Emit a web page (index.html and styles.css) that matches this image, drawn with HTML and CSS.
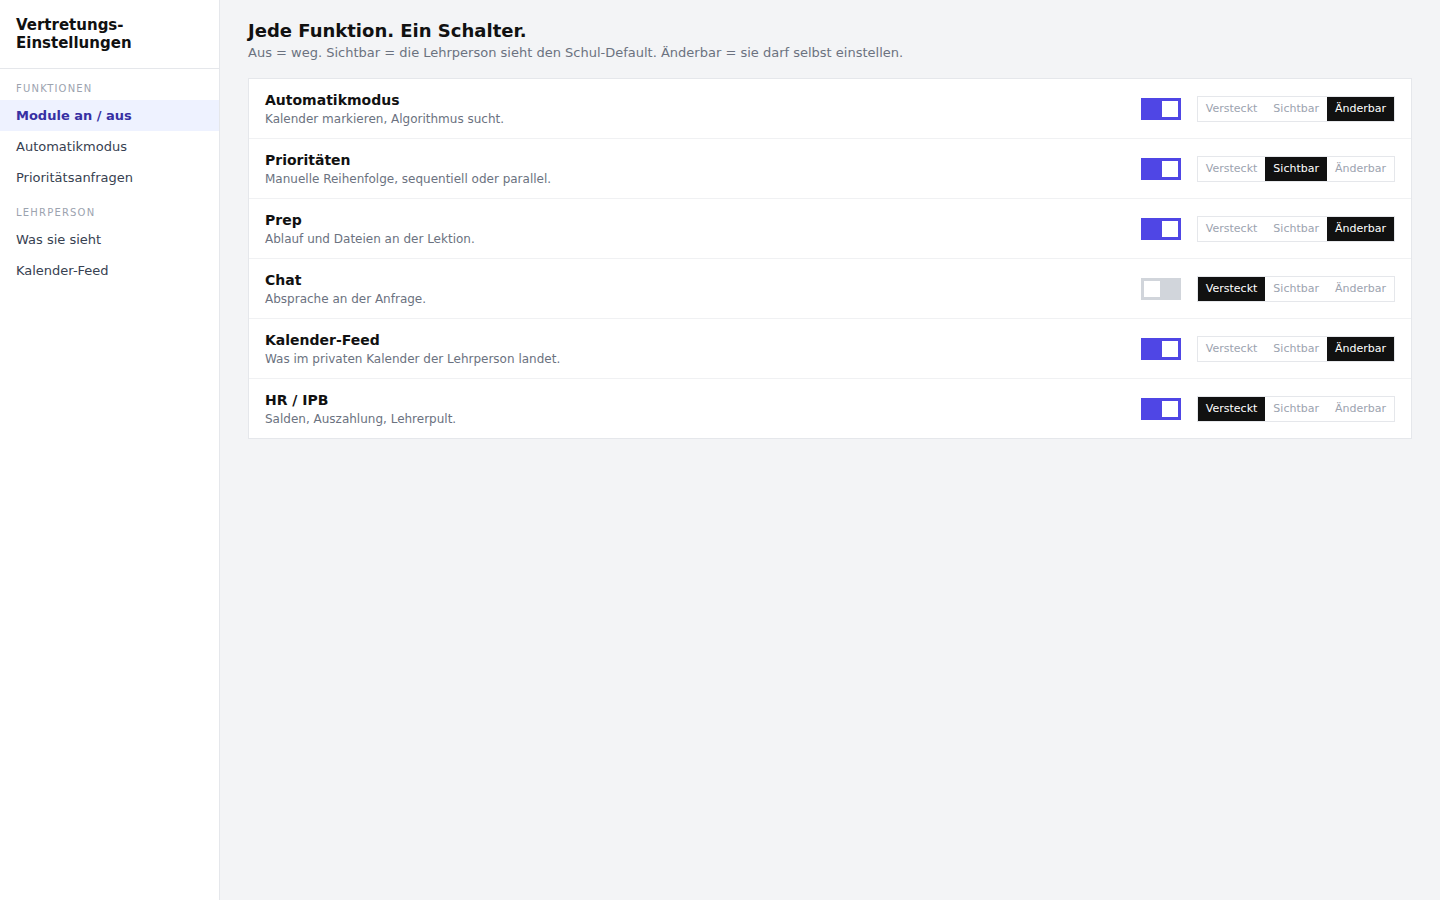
FILE: index.html
```html
<!DOCTYPE html>
<html lang="de">
<head>
<meta charset="utf-8">
<title>Vertretungs-Einstellungen</title>
<link rel="stylesheet" href="styles.css">
</head>
<body>
<div class="app">
  <aside class="sidebar">
    <div class="brand">Vertretungs-<br>Einstellungen</div>
    <div class="section-label">Funktionen</div>
    <a class="nav-item active">Module an / aus</a>
    <a class="nav-item">Automatikmodus</a>
    <a class="nav-item">Prioritätsanfragen</a>
    <div class="section-label">Lehrperson</div>
    <a class="nav-item">Was sie sieht</a>
    <a class="nav-item">Kalender-Feed</a>
  </aside>
  <main class="main">
    <h1 class="title">Jede Funktion. Ein Schalter.</h1>
    <p class="subtitle">Aus = weg. Sichtbar = die Lehrperson sieht den Schul-Default. Änderbar = sie darf selbst einstellen.</p>
    <div class="card">
      <div class="row">
        <div class="info"><div class="name">Automatikmodus</div><div class="desc">Kalender markieren, Algorithmus sucht.</div></div>
        <div class="toggle on"><span class="knob"></span></div>
        <div class="seg"><span class="opt">Versteckt</span><span class="opt">Sichtbar</span><span class="opt sel">Änderbar</span></div>
      </div>
      <div class="row">
        <div class="info"><div class="name">Prioritäten</div><div class="desc">Manuelle Reihenfolge, sequentiell oder parallel.</div></div>
        <div class="toggle on"><span class="knob"></span></div>
        <div class="seg"><span class="opt">Versteckt</span><span class="opt sel">Sichtbar</span><span class="opt">Änderbar</span></div>
      </div>
      <div class="row">
        <div class="info"><div class="name">Prep</div><div class="desc">Ablauf und Dateien an der Lektion.</div></div>
        <div class="toggle on"><span class="knob"></span></div>
        <div class="seg"><span class="opt">Versteckt</span><span class="opt">Sichtbar</span><span class="opt sel">Änderbar</span></div>
      </div>
      <div class="row">
        <div class="info"><div class="name">Chat</div><div class="desc">Absprache an der Anfrage.</div></div>
        <div class="toggle"><span class="knob"></span></div>
        <div class="seg"><span class="opt sel">Versteckt</span><span class="opt">Sichtbar</span><span class="opt">Änderbar</span></div>
      </div>
      <div class="row">
        <div class="info"><div class="name">Kalender-Feed</div><div class="desc">Was im privaten Kalender der Lehrperson landet.</div></div>
        <div class="toggle on"><span class="knob"></span></div>
        <div class="seg"><span class="opt">Versteckt</span><span class="opt">Sichtbar</span><span class="opt sel">Änderbar</span></div>
      </div>
      <div class="row">
        <div class="info"><div class="name">HR / IPB</div><div class="desc">Salden, Auszahlung, Lehrerpult.</div></div>
        <div class="toggle on"><span class="knob"></span></div>
        <div class="seg"><span class="opt sel">Versteckt</span><span class="opt">Sichtbar</span><span class="opt">Änderbar</span></div>
      </div>
    </div>
  </main>
</div>
</body>
</html>
```
FILE: styles.css
```css
* { box-sizing: border-box; }
html, body { margin: 0; padding: 0; height: 100%; }
body {
  font-family: "DejaVu Sans", Verdana, sans-serif;
  background: #f3f4f6;
  color: #111111;
}
.app { display: flex; min-height: 100vh; }
.sidebar {
  width: 220px;
  flex: none;
  background: #ffffff;
  border-right: 1px solid #e5e7eb;
  display: flex;
  flex-direction: column;
}
.brand {
  font-size: 15px;
  font-weight: bold;
  line-height: 18px;
  padding: 16px 16px 16px;
  border-bottom: 1px solid #e5e7eb;
  color: #111111;
}
.section-label {
  font-size: 10px;
  letter-spacing: 1.2px;
  text-transform: uppercase;
  color: #9ca3af;
  padding: 14px 16px 5px;
  line-height: 12px;
}
.nav-item {
  display: block;
  font-size: 13px;
  line-height: 31px;
  height: 31px;
  padding: 0 16px;
  color: #374151;
}
.nav-item.active {
  background: #eef2ff;
  color: #3730a3;
  font-weight: bold;
}
.main {
  flex: 1;
  padding: 20px 28px;
}
.title {
  margin: 0;
  font-size: 18px;
  font-weight: bold;
  line-height: 22px;
  color: #111111;
}
.subtitle {
  margin: 3px 0 0;
  font-size: 13px;
  line-height: 16px;
  color: #6b7280;
}
.card {
  margin-top: 17px;
  background: #ffffff;
  border: 1px solid #e5e7eb;
}
.row {
  display: flex;
  align-items: center;
  height: 60px;
  padding: 0 16px;
  border-top: 1px solid #f0f1f3;
}
.row:first-child { border-top: none; height: 59px; }
.info { flex: 1; padding-top: 1px; }
.name {
  font-size: 14px;
  font-weight: bold;
  line-height: 18px;
  color: #111111;
}
.desc {
  font-size: 12px;
  line-height: 16px;
  color: #6b7280;
  margin-top: 2px;
}
.toggle {
  width: 40px;
  height: 22px;
  padding: 3px;
  background: #d1d5db;
  display: flex;
  justify-content: flex-start;
  margin-right: 16px;
}
.toggle.on { background: #4f46e5; justify-content: flex-end; }
.knob { width: 16px; height: 16px; background: #ffffff; display: block; }
.seg {
  display: flex;
  border: 1px solid #e5e7eb;
  height: 26px;
}
.opt {
  font-size: 11px;
  line-height: 24px;
  padding: 0 8px;
  color: #9ca3af;
}
.opt.sel { background: #111111; color: #ffffff; }
```
